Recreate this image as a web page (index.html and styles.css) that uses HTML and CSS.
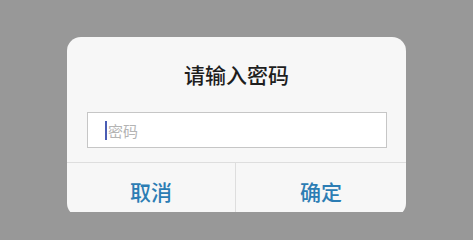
FILE: index.html
```html
<!DOCTYPE html>
<html lang="zh">
<head>
<meta charset="utf-8">
<link rel="stylesheet" href="styles.css">
</head>
<body>
<div class="dialog">
  <div class="title">请输入密码</div>
  <div class="field"><span class="caret"></span><span class="placeholder">密码</span></div>
  <div class="actions">
    <div class="btn btn-cancel">取消</div>
    <div class="btn">确定</div>
  </div>
</div>
</body>
</html>
```
FILE: styles.css
```css
html, body {
  margin: 0;
  padding: 0;
  background: #989898;
  height: 212px;
  overflow: hidden;
}
body {
  box-sizing: border-box;
  font-family: "Noto Sans CJK SC", "Noto Sans", sans-serif;
  padding-top: 37px;
  padding-left: 67px;
}
.dialog {
  width: 339px;
  height: 180px;
  background: #f7f7f7;
  border-radius: 14px;
  display: flex;
  flex-direction: column;
}
.title {
  padding-top: 26px;
  height: 22px;
  line-height: 22px;
  font-size: 21px;
  font-weight: 500;
  color: #1e1e1e;
  text-align: center;
  margin-bottom: 27px;
}
.field {
  margin-left: 20px;
  width: 300px;
  height: 36px;
  box-sizing: border-box;
  background: #fff;
  border: 1px solid #c6c6c6;
  display: flex;
  align-items: center;
  padding-left: 17px;
}
.caret {
  width: 2px;
  height: 19px;
  background: #4a5db4;
  margin-right: 1px;
}
.placeholder {
  font-size: 15px;
  line-height: 19px;
  color: #b4b4b4;
}
.actions {
  margin-top: 14px;
  border-top: 1px solid #dedede;
  display: flex;
  flex: 1;
}
.btn {
  flex: 1;
  text-align: center;
  padding-top: 6px;
  line-height: 44px;
  font-size: 21px;
  font-weight: 500;
  color: #2c7db4;
}
.btn-cancel {
  flex: 0 0 168px;
  border-right: 1px solid #dedede;
}
```
